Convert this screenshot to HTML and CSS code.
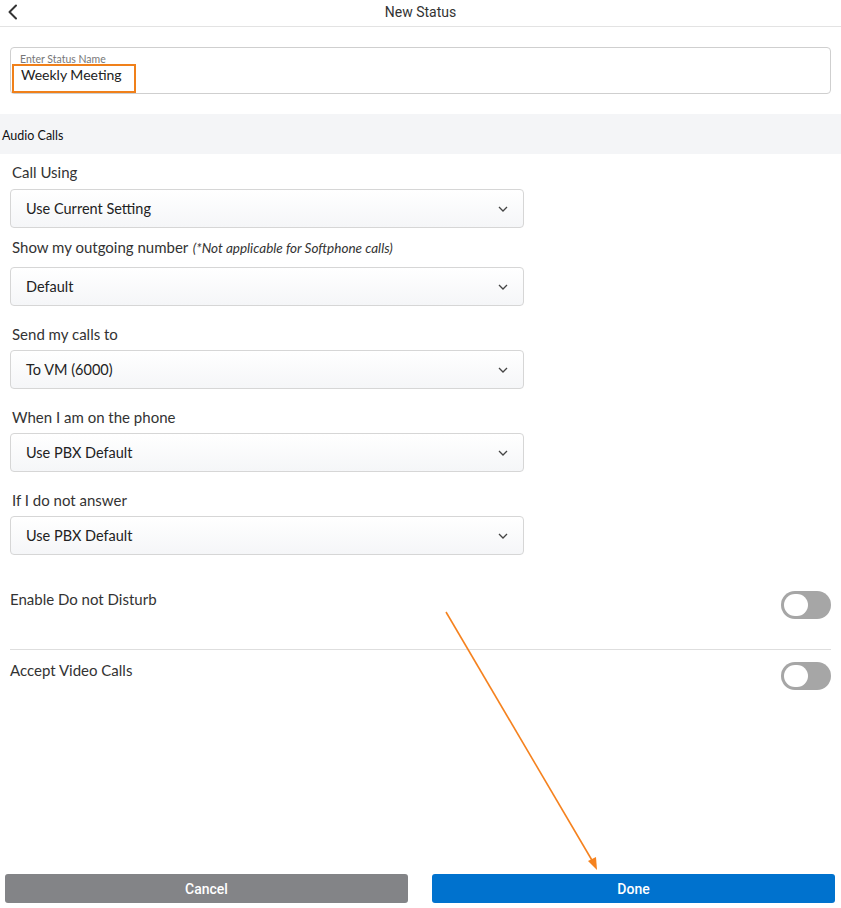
FILE: index.html
```html
<!DOCTYPE html>
<html lang="en">
<head>
<meta charset="utf-8">
<title>New Status</title>
<link rel="stylesheet" href="styles.css">
</head>
<body>
<div class="page">
  <header class="topbar">
    <button class="back" aria-label="Back">
      <svg width="12" height="16" viewBox="0 0 12 16"><path d="M9 1.5 L2.5 8 L9 14.5" fill="none" stroke="#333" stroke-width="2" stroke-linecap="round" stroke-linejoin="round"/></svg>
    </button>
    <h1 class="title">New Status</h1>
  </header>

  <main class="content">
    <div class="name-box">
      <span class="name-label">Enter Status Name</span>
      <span class="name-value">Weekly Meeting</span>
      <span class="highlight"></span>
    </div>

    <div class="section-bar">Audio Calls</div>

    <div class="fields">
      <div class="field first">
        <div class="label">Call Using</div>
        <div class="select"><span>Use Current Setting</span><svg class="chev" width="10" height="6" viewBox="0 0 10 6"><path d="M1 1 L5 5 L9 1" fill="none" stroke="#444" stroke-width="1.3"/></svg></div>
      </div>
      <div class="field compact">
        <div class="label">Show my outgoing number <em class="note">(*Not applicable for Softphone calls)</em></div>
        <div class="select wide-gap"><span>Default</span><svg class="chev" width="10" height="6" viewBox="0 0 10 6"><path d="M1 1 L5 5 L9 1" fill="none" stroke="#444" stroke-width="1.3"/></svg></div>
      </div>
      <div class="field">
        <div class="label">Send my calls to</div>
        <div class="select"><span>To VM (6000)</span><svg class="chev" width="10" height="6" viewBox="0 0 10 6"><path d="M1 1 L5 5 L9 1" fill="none" stroke="#444" stroke-width="1.3"/></svg></div>
      </div>
      <div class="field">
        <div class="label">When I am on the phone</div>
        <div class="select"><span>Use PBX Default</span><svg class="chev" width="10" height="6" viewBox="0 0 10 6"><path d="M1 1 L5 5 L9 1" fill="none" stroke="#444" stroke-width="1.3"/></svg></div>
      </div>
      <div class="field">
        <div class="label">If I do not answer</div>
        <div class="select"><span>Use PBX Default</span><svg class="chev" width="10" height="6" viewBox="0 0 10 6"><path d="M1 1 L5 5 L9 1" fill="none" stroke="#444" stroke-width="1.3"/></svg></div>
      </div>
    </div>

    <div class="toggle-row divided">
      <span class="toggle-label">Enable Do not Disturb</span>
      <span class="toggle"><span class="knob"></span></span>
    </div>
    <div class="toggle-row second">
      <span class="toggle-label">Accept Video Calls</span>
      <span class="toggle"><span class="knob"></span></span>
    </div>
  </main>

  <footer class="actions">
    <button class="btn cancel">Cancel</button>
    <button class="btn done">Done</button>
  </footer>

  <svg class="annotation" width="841" height="908" viewBox="0 0 841 908">
    <line x1="446" y1="612" x2="593" y2="862" stroke="#f5821f" stroke-width="1.6"/>
    <polygon points="597,870 588,861 596,857" fill="#f5821f"/>
  </svg>
</div>
</body>
</html>
```

FILE: styles.css
```css
* { box-sizing: border-box; }
html, body { margin: 0; padding: 0; }
body {
  width: 841px;
  height: 908px;
  background: #fff;
  font-family: Lato, "Open Sans", sans-serif;
  color: #333;
  overflow: hidden;
}
.page {
  position: relative;
  height: 908px;
  display: flex;
  flex-direction: column;
}
.topbar {
  height: 27px;
  border-bottom: 1px solid #e3e3e3;
  display: flex;
  align-items: center;
  justify-content: center;
  position: relative;
}
.back {
  position: absolute;
  left: 6px;
  top: 3px;
  border: 0;
  background: none;
  padding: 0;
  width: 14px;
  height: 18px;
  display: flex;
  align-items: center;
  justify-content: center;
}
.title {
  margin: 0;
  font-family: Roboto, sans-serif;
  font-weight: 400;
  font-size: 14px;
  color: #333;
  line-height: 20px;
  margin-top: -3px;
}
.content {
  flex: 1;
}
.name-box {
  position: relative;
  margin: 20px 10px 0 10px;
  height: 47px;
  border: 1px solid #cfcfcf;
  border-radius: 4px;
  padding: 5px 0 0 9px;
  display: flex;
  flex-direction: column;
}
.name-label {
  font-size: 10.5px;
  color: #777;
  line-height: 12px;
}
.name-value {
  font-size: 14px;
  color: #222;
  line-height: 18px;
  margin-top: 1px;
  margin-left: 1px;
}
.highlight {
  position: absolute;
  left: 1px;
  top: 16px;
  width: 124px;
  height: 29px;
  border: 2px solid #f0801a;
}
.section-bar {
  margin-top: 20px;
  height: 40px;
  background: #f4f5f7;
  font-size: 12.5px;
  color: #111;
  padding-left: 2px;
  display: flex;
  align-items: center;
  padding-top: 2px;
}
.fields {
  padding: 0 10px;
  width: 534px;
}
.field { margin-top: 18px; }
.field.first { margin-top: 8px; }
.field.first .label { margin-bottom: 7px; }
.field.compact { margin-top: 9px; }
.label {
  font-size: 15px;
  line-height: 20px;
  color: #333;
  padding-left: 2px;
  margin-bottom: 6px;
}
.note {
  font-size: 13.5px;
  color: #333;
  margin-left: 1px;
}
.select.wide-gap { margin-top: 9px; }
.select {
  height: 39px;
  border: 1px solid #d6d6d6;
  border-radius: 4px;
  background: linear-gradient(#ffffff, #f5f6f8);
  display: flex;
  align-items: center;
  justify-content: space-between;
  padding: 0 15px 0 15px;
  font-size: 14.5px;
  color: #222;
}
.chev { margin-top: 1px; }
.toggle-row {
  margin: 0 10px;
  display: flex;
  justify-content: space-between;
  align-items: flex-start;
}
.toggle-row.divided {
  margin-top: 35px;
  padding-bottom: 30px;
  border-bottom: 1px solid #dedede;
}
.toggle-row.second {
  padding-top: 11px;
}
.toggle-label {
  font-size: 15px;
  line-height: 20px;
  color: #333;
  margin-top: -1px;
}
.toggle {
  width: 50px;
  height: 28px;
  border-radius: 14px;
  background: #a6a6a6;
  display: flex;
  align-items: center;
  padding-left: 3px;
  margin-top: 1px;
}
.knob {
  width: 24px;
  height: 22px;
  border-radius: 11px;
  background: #fff;
}
.actions {
  display: flex;
  gap: 24px;
  padding: 0 6px 5px 5px;
}
.btn {
  flex: 1;
  height: 29px;
  border: 0;
  border-radius: 3px;
  color: #fff;
  font-family: Roboto, sans-serif;
  font-weight: 500;
  font-size: 14px;
}
.btn.cancel { background: #838487; }
.btn.done { background: #0072ce; }
.annotation {
  position: absolute;
  left: 0;
  top: 0;
  pointer-events: none;
}
```
